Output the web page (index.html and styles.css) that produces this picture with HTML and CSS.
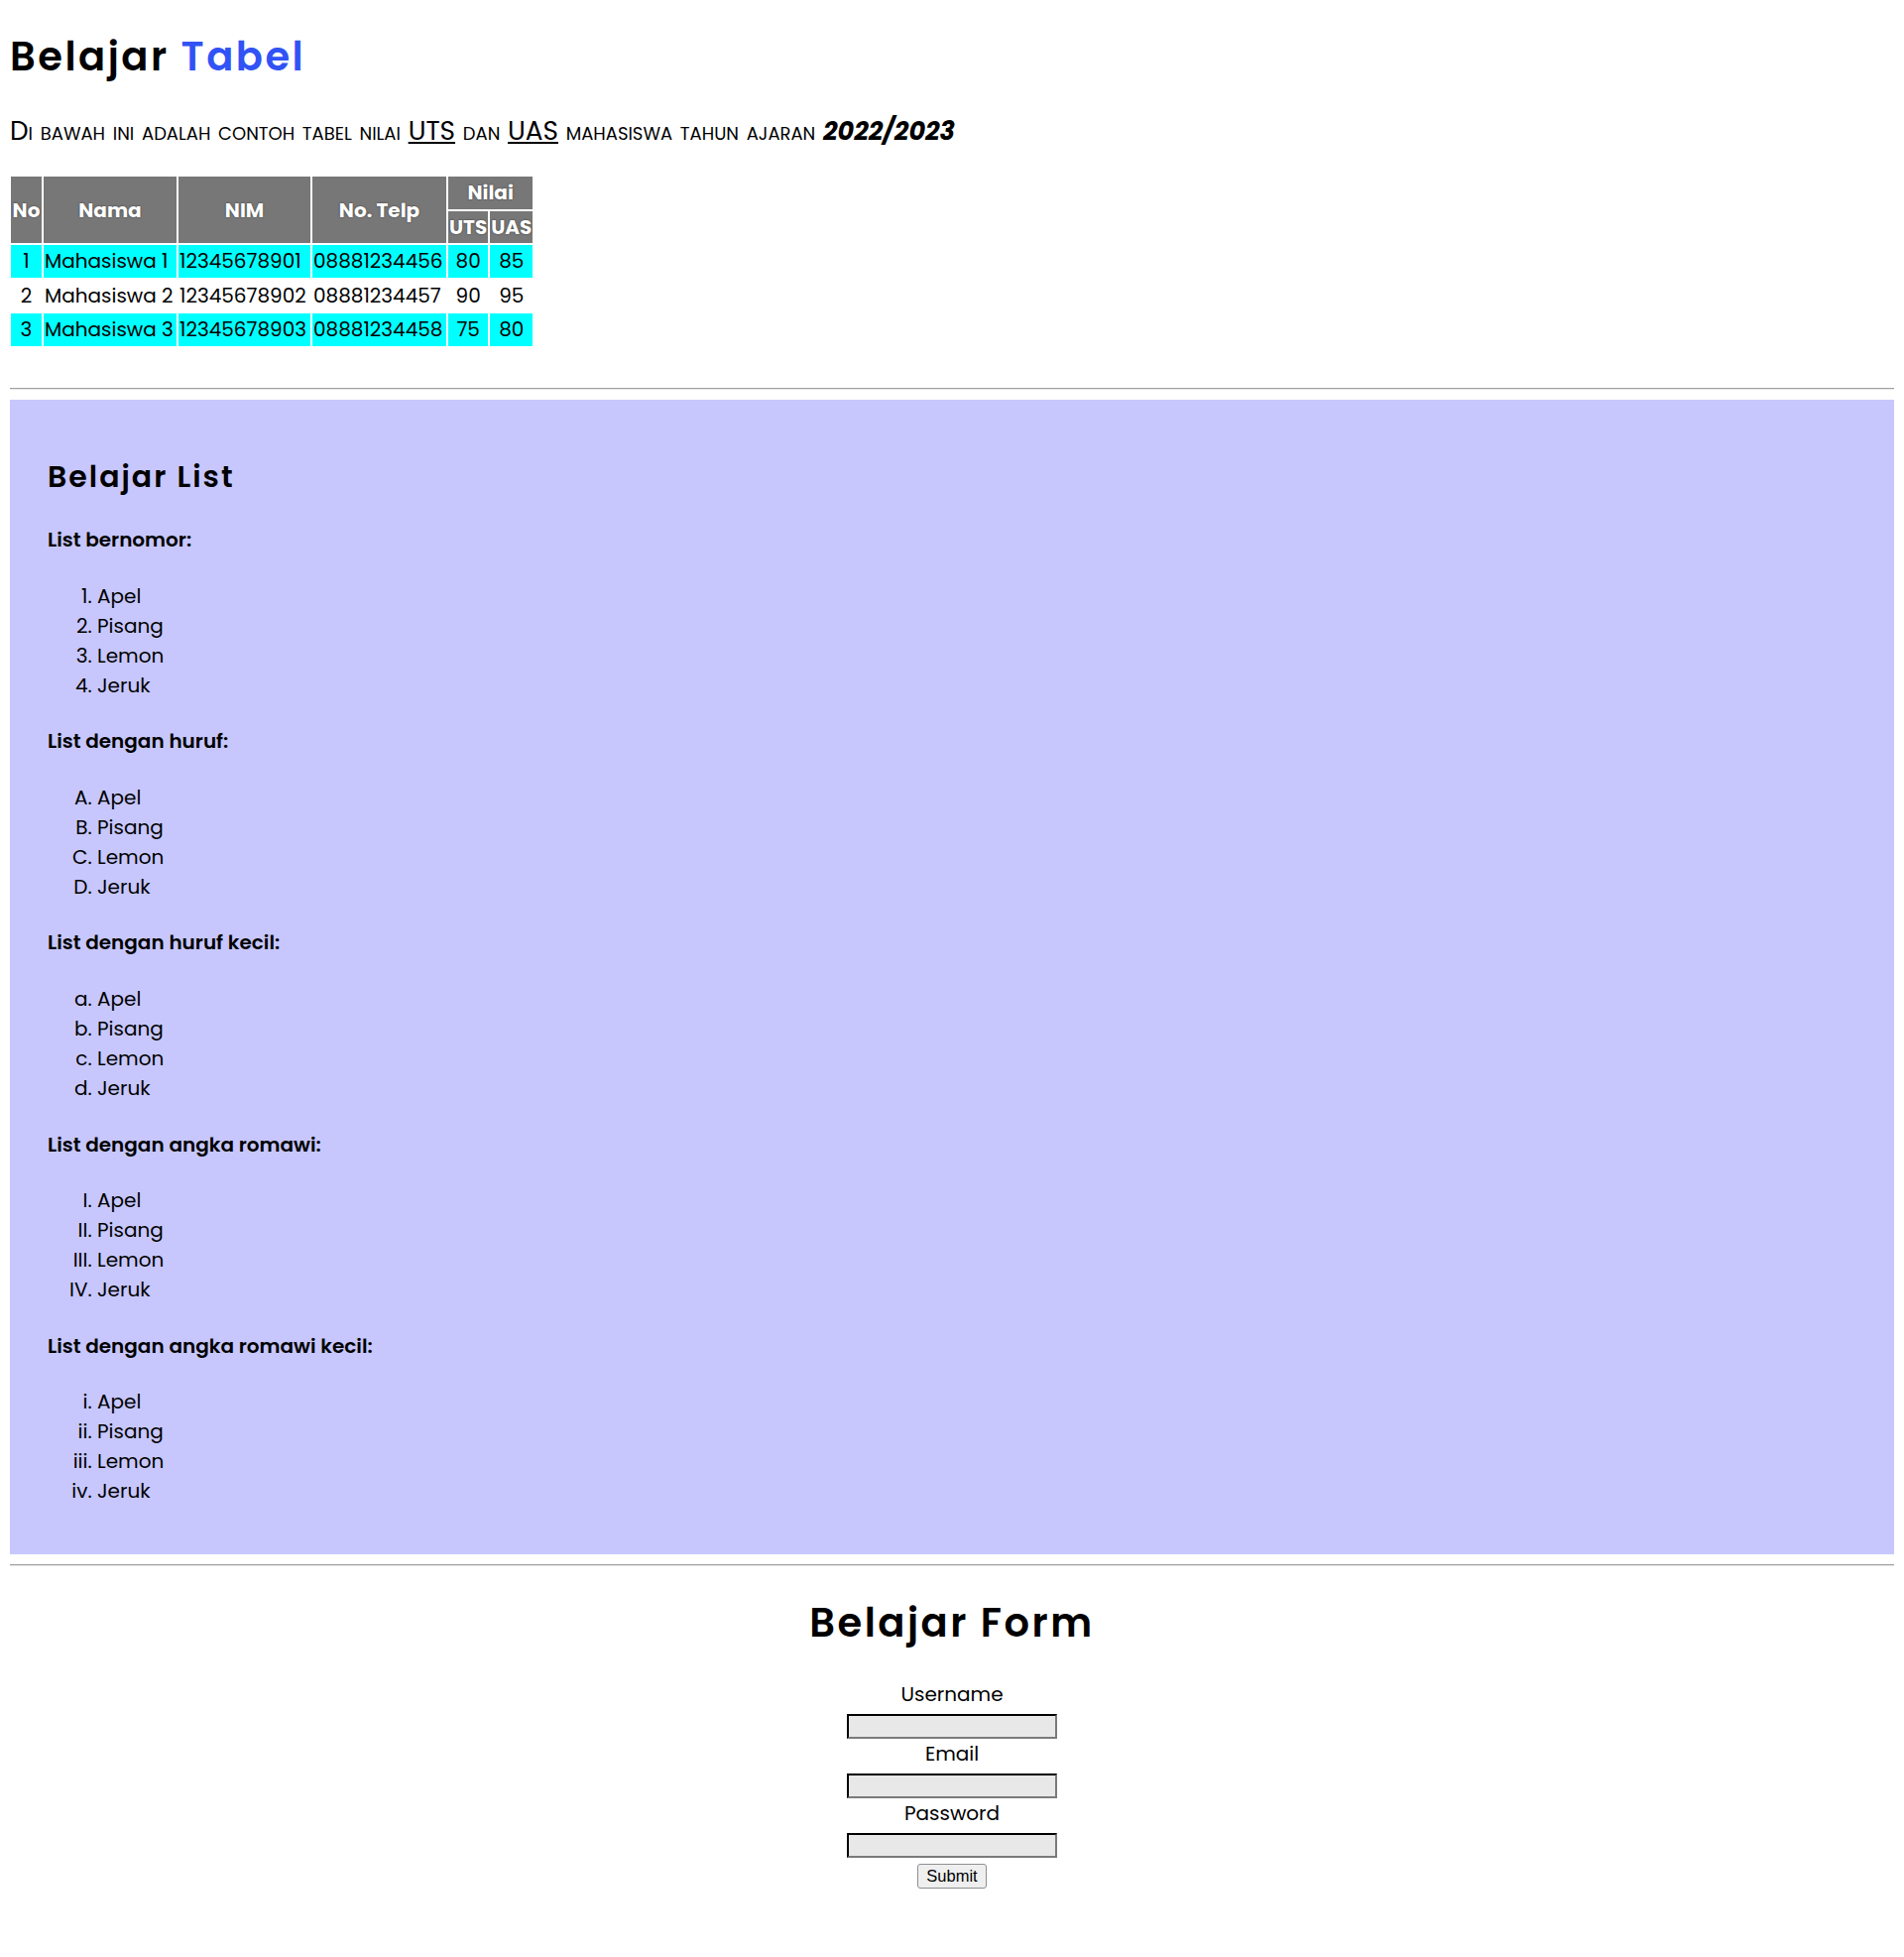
FILE: index.html
```html
<!DOCTYPE html>
<html lang="id">
<head>
<meta charset="utf-8">
<title>Belajar HTML</title>
<link rel="stylesheet" href="styles.css">
</head>
<body>
<h1 class="title">Belajar <span class="accent">Tabel</span></h1>
<p class="intro">Di bawah ini adalah contoh tabel nilai <u class="big">UTS</u> dan <u class="big">UAS</u> mahasiswa tahun ajaran <b class="year">2022/2023</b></p>
<table class="grades">
  <thead>
    <tr>
      <th rowspan="2" class="c-no">No</th>
      <th rowspan="2" class="c-nama">Nama</th>
      <th rowspan="2" class="c-nim">NIM</th>
      <th rowspan="2" class="c-telp">No. Telp</th>
      <th colspan="2">Nilai</th>
    </tr>
    <tr>
      <th class="c-uts">UTS</th>
      <th class="c-uas">UAS</th>
    </tr>
  </thead>
  <tbody>
    <tr class="hl"><td class="center">1</td><td>Mahasiswa 1</td><td>12345678901</td><td>08881234456</td><td class="center">80</td><td class="center">85</td></tr>
    <tr><td class="center">2</td><td>Mahasiswa 2</td><td>12345678902</td><td>08881234457</td><td class="center">90</td><td class="center">95</td></tr>
    <tr class="hl"><td class="center">3</td><td>Mahasiswa 3</td><td>12345678903</td><td>08881234458</td><td class="center">75</td><td class="center">80</td></tr>
  </tbody>
</table>
<div class="spacer"></div>
<hr class="rule">
<section class="lists">
  <h2 class="section-title">Belajar List</h2>
  <h4 class="list-title">List bernomor:</h4>
  <ol type="1"><li>Apel</li><li>Pisang</li><li>Lemon</li><li>Jeruk</li></ol>
  <h4 class="list-title">List dengan huruf:</h4>
  <ol type="A"><li>Apel</li><li>Pisang</li><li>Lemon</li><li>Jeruk</li></ol>
  <h4 class="list-title">List dengan huruf kecil:</h4>
  <ol type="a"><li>Apel</li><li>Pisang</li><li>Lemon</li><li>Jeruk</li></ol>
  <h4 class="list-title">List dengan angka romawi:</h4>
  <ol type="I"><li>Apel</li><li>Pisang</li><li>Lemon</li><li>Jeruk</li></ol>
  <h4 class="list-title">List dengan angka romawi kecil:</h4>
  <ol type="i"><li>Apel</li><li>Pisang</li><li>Lemon</li><li>Jeruk</li></ol>
</section>
<hr class="rule">
<section class="form-area">
  <h1 class="form-title">Belajar Form</h1>
  <form class="login">
    <label class="field-label" for="username">Username</label>
    <input class="field" type="text" id="username" name="username">
    <label class="field-label" for="email">Email</label>
    <input class="field" type="email" id="email" name="email">
    <label class="field-label" for="password">Password</label>
    <input class="field" type="password" id="password" name="password">
    <button class="submit" type="submit">Submit</button>
  </form>
</section>
</body>
</html>
```
FILE: styles.css
```css
html {
  background: #ffffff;
}

body {
  margin: 10px;
  font-family: "Poppins", "Inter", "Noto Sans", sans-serif;
  font-size: 20px;
  line-height: 30px;
  color: #000;
}

.title {
  font-size: 40px;
  line-height: 60px;
  font-weight: 600;
  letter-spacing: 2.5px;
  margin: 17px 0 25px;
}

.accent {
  color: #3153f5;
}

.intro {
  font-size: 26.3px;
  font-variant: small-caps;
  word-spacing: 0.7px;
  margin: 25px 0 24px;
  line-height: 39px;
}

.big {
  font-variant: normal;
}

.year {
  font-size: 25.5px;
  font-style: italic;
  font-weight: 700;
  font-variant: normal;
}

.grades {
  border-spacing: 2.5px;
  margin-left: -1px;
}

.grades th,
.grades td {
  padding: 1.25px 1px;
  line-height: 30px;
  text-align: left;
  white-space: nowrap;
}

.grades th,
.grades .center {
  text-align: center;
}

.grades th {
  background: #777777;
  color: #ffffff;
  font-weight: 700;
  text-shadow: 0 0 2px rgba(0, 0, 0, 0.55);
}

.c-no { width: 29px; }
.c-nama { width: 132px; }
.c-nim { width: 131px; }
.c-telp { width: 133px; }
.c-uts { width: 37px; }
.c-uas { width: 40px; }

.hl td {
  background: #00ffff;
}

.spacer {
  height: 30px;
}

.rule {
  margin: 10px 0;
  border: none;
  border-top: 1px solid #a0a0a0;
  border-bottom: 1px solid #e6e6e6;
  height: 0;
}

.lists {
  background: #c7c7fd;
  padding: 30px 38px 29px;
}

.section-title {
  font-size: 30px;
  line-height: 45px;
  font-weight: 600;
  letter-spacing: 2px;
  margin: 25px 0;
}

.list-title {
  font-size: 20px;
  font-weight: 600;
  margin: 26.6px 0;
}

.lists ol {
  margin: 20px 0;
  padding-left: 50px;
}

.form-area {
  text-align: center;
}

.form-title {
  font-size: 40px;
  line-height: 60px;
  font-weight: 600;
  letter-spacing: 2.5px;
  margin: 27px 0;
}

.login {
  display: flex;
  flex-direction: column;
  align-items: center;
}

.field-label {
  display: block;
  line-height: 30px;
}

.field {
  box-sizing: border-box;
  width: 212px;
  height: 25px;
  margin-top: 5px;
  background: #e8e8e8;
  border: 2px inset #767676;
  border-top-color: #3c3c3c;
  border-left-color: #3c3c3c;
  border-right-color: #7a7a7a;
  border-bottom-color: #7a7a7a;
  padding: 1px 3px;
}

.submit {
  margin-top: 6px;
  height: 25px;
  width: 70px;
  font-family: "Liberation Sans", Arial, sans-serif;
  font-size: 16.5px;
  background: #efefef;
  border: 1px solid #8f8f8f;
  border-radius: 3px;
  color: #000;
  padding: 0;
}
```
